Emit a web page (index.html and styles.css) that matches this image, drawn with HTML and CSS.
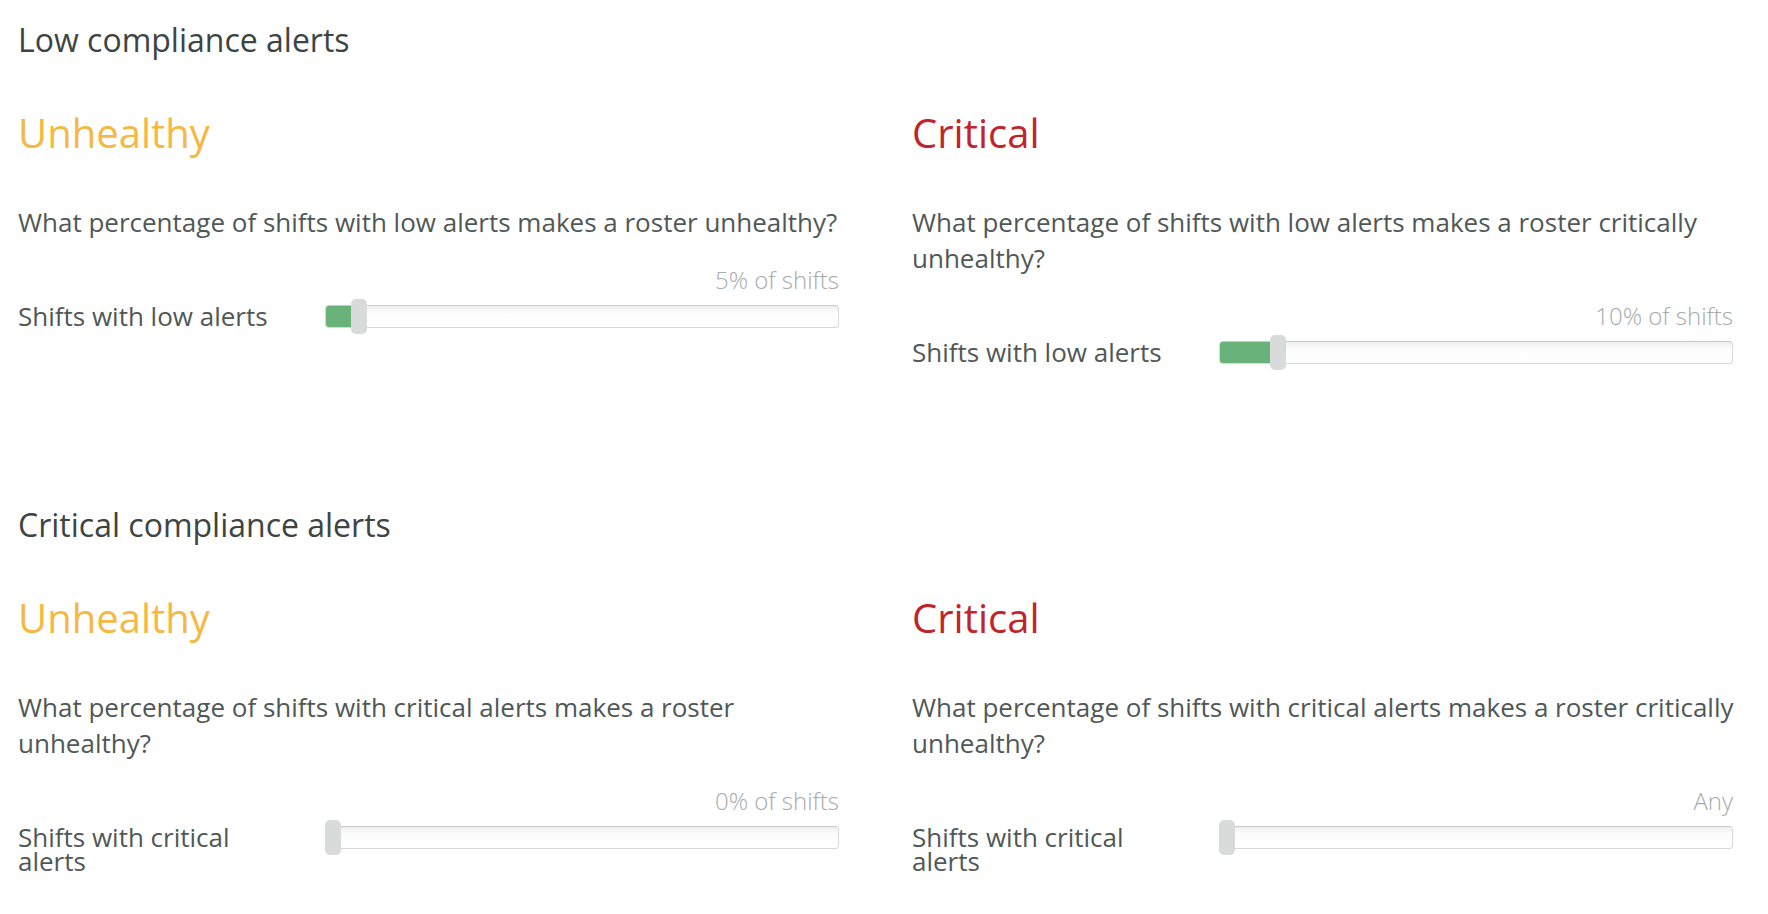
FILE: index.html
```html
<!DOCTYPE html>
<html lang="en">
<head>
    <meta charset="UTF-8">
    <meta name="viewport" content="width=device-width, initial-scale=1.0">
    <title>Roster health thresholds</title>
    <link rel="stylesheet" href="styles.css">
</head>
<body>
    <div class="settings">
        <section class="alert-group">
            <h2 class="group-title">Low compliance alerts</h2>
            <div class="levels">
                <div class="level">
                    <h3 class="level-title unhealthy">Unhealthy</h3>
                    <p class="question">What percentage of shifts with low alerts makes a roster unhealthy?</p>
                    <div class="value">5% of shifts</div>
                    <div class="slider-row">
                        <div class="row-label">Shifts with low alerts</div>
                        <div class="slider">
                            <div class="track"><div class="fill" style="width: calc(5% + 8px)"></div></div>
                            <div class="thumb" style="left: 5%"></div>
                        </div>
                    </div>
                </div>
                <div class="level">
                    <h3 class="level-title critical">Critical</h3>
                    <p class="question">What percentage of shifts with low alerts makes a roster critically unhealthy?</p>
                    <div class="value">10% of shifts</div>
                    <div class="slider-row">
                        <div class="row-label">Shifts with low alerts</div>
                        <div class="slider">
                            <div class="track"><div class="fill" style="width: calc(10% + 8px)"></div></div>
                            <div class="thumb" style="left: 10%"></div>
                        </div>
                    </div>
                </div>
            </div>
        </section>

        <section class="alert-group">
            <h2 class="group-title">Critical compliance alerts</h2>
            <div class="levels">
                <div class="level">
                    <h3 class="level-title unhealthy">Unhealthy</h3>
                    <p class="question">What percentage of shifts with critical alerts makes a roster unhealthy?</p>
                    <div class="value">0% of shifts</div>
                    <div class="slider-row">
                        <div class="row-label">Shifts with critical alerts</div>
                        <div class="slider">
                            <div class="track"></div>
                            <div class="thumb" style="left: 0%"></div>
                        </div>
                    </div>
                </div>
                <div class="level">
                    <h3 class="level-title critical">Critical</h3>
                    <p class="question">What percentage of shifts with critical alerts makes a roster critically unhealthy?</p>
                    <div class="value">Any</div>
                    <div class="slider-row">
                        <div class="row-label">Shifts with critical alerts</div>
                        <div class="slider">
                            <div class="track"></div>
                            <div class="thumb" style="left: 0%"></div>
                        </div>
                    </div>
                </div>
            </div>
        </section>
    </div>
</body>
</html>
```

FILE: styles.css
```css
body {
    margin: 0;
    font-family: "Open Sans", "Noto Sans", sans-serif;
    color: #505856;
    background: #fff;
}
.settings {
    padding: 20px 35px 0 18px;
}
.alert-group {
    margin-bottom: 135px;
}
.group-title {
    margin: 0 0 48px;
    font-size: 32px;
    line-height: 40px;
    font-weight: 400;
    color: #3d4442;
}
.levels {
    display: grid;
    grid-template-columns: 1fr 1fr;
    column-gap: 73px;
}
.level-title {
    margin: 0 0 46px;
    font-size: 40px;
    line-height: 50px;
    font-weight: 400;
}
.unhealthy {
    color: #f5b843;
}
.critical {
    color: #c1252c;
}
.question {
    margin: 0 -6px 25px 0;
    font-size: 26px;
    line-height: 36px;
}
.value {
    text-align: right;
    font-size: 24px;
    line-height: 30px;
    font-weight: 300;
    color: #a6abaa;
    margin-bottom: 4px;
}
.slider-row {
    display: flex;
    align-items: flex-start;
}
.row-label {
    flex: 0 0 267px;
    margin: 5px 40px 0 0;
    font-size: 26px;
    line-height: 24px;
}
.slider {
    flex: 1;
    position: relative;
    padding: 6px 0;
}
.track {
    height: 23px;
    box-sizing: border-box;
    border: 1px solid #d8d8d8;
    border-top-color: #c9c9c9;
    border-radius: 4px;
    background: linear-gradient(#efefef, #fdfdfd 35%, #fff);
    overflow: hidden;
}
.fill {
    height: 100%;
    background-color: #69b279;
}
.thumb {
    position: absolute;
    top: 0;
    width: 16px;
    height: 35px;
    border-radius: 5px;
    background-color: #d9dbda;
}
```
